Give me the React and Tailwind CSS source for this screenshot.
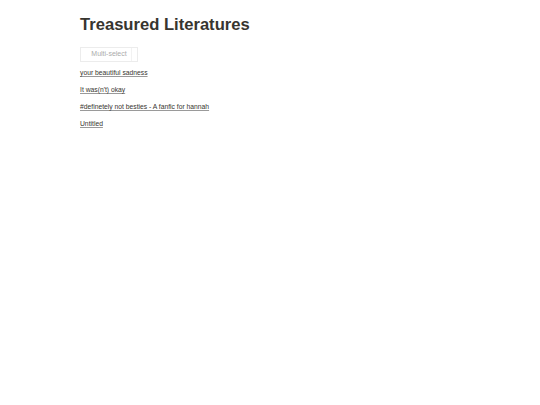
export default function App() {
    const pages = [
        'your beautiful sadness',
        "It was(n't) okay",
        '#definetely not besties - A fanfic for hannah',
        'Untitled',
    ];

    return (
        <div className="min-h-screen bg-white pl-[80px] pt-[15px] text-[#37352f]" style={{ fontFamily: '"Liberation Sans", Arial, sans-serif' }}>
            <h1 className="text-[16.6px] font-bold leading-[1.2]">Treasured Literatures</h1>

            <div className="mt-[12px] flex h-[15px] w-[58px] border border-[#ececec]">
                <div className="flex flex-1 items-center justify-center pl-[6px] text-[7px] font-normal text-[#ababab]">Multi-select</div>
                <div className="w-[6px] border-l border-[#f2f2f2]"></div>
            </div>

            <div className="mt-[7px] flex flex-col gap-[9px]">
                {pages.map((p) => (
                    <a key={p} href="#" className="text-[6.75px] leading-[8px] underline decoration-[#9a9a9a] underline-offset-[1px]">
                        {p}
                    </a>
                ))}
            </div>
        </div>
    );
}
